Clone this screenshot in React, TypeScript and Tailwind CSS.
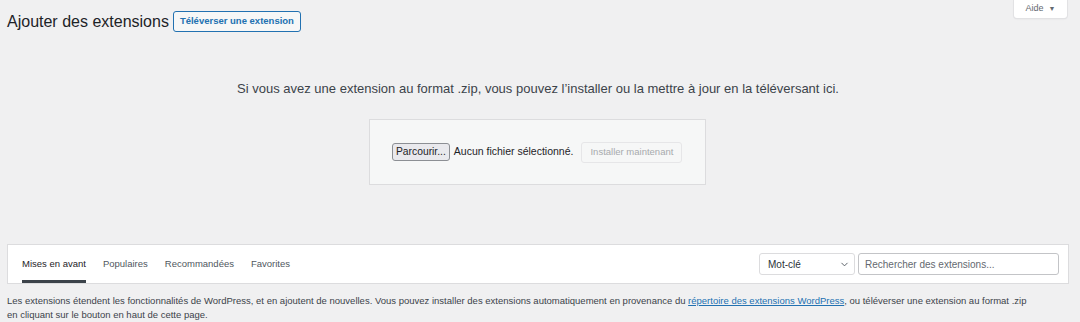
// "Ajouter des extensions" admin screen: upload panel + plugin filter bar.

import { ChevronDown } from 'lucide-react'

const TABS = ['Mises en avant', 'Populaires', 'Recommandées', 'Favorites']

export default function App() {
  return (
    <div
      className="w-[1080px] h-[322px] overflow-hidden bg-[#f0f0f1] text-[#3c434a] relative"
      style={{ fontFamily: '"Liberation Sans", Arial, sans-serif' }}
    >
      {/* help tab */}
      <div className="absolute right-[13px] top-0 w-[53px] h-[18px] bg-white rounded-b-[3px] shadow-[0_0_0_1px_#e2e2e4,0_1px_2px_rgba(0,0,0,0.08)] flex items-center justify-center gap-[5px] text-[9px] text-[#646970]">
        Aide <span className="text-[7px]">▼</span>
      </div>

      <div className="flex items-center gap-[4px] pl-[7px] pt-[11px]">
        <h1 className="text-[16px] leading-[21px] text-[#1d2327]">Ajouter des extensions</h1>
        <button className="h-[21px] px-[6px] border border-[#2271b1] rounded-[3px] bg-[#f6f7f7] text-[#2271b1] text-[9.5px] font-bold">
          Téléverser une extension
        </button>
      </div>

      <p className="mt-[49px] text-center text-[13px] leading-[16px] text-[#3c434a] pr-[4px]">
        Si vous avez une extension au format .zip, vous pouvez l’installer ou la mettre à jour en la téléversant ici.
      </p>

      <div className="ml-[369px] mt-[22px] w-[337px] h-[66px] border border-[#dcdcde] bg-[#f6f7f7] flex items-center pl-[22px] gap-[4px]">
        <button className="h-[18px] px-[3px] border border-[#8c8f94] rounded-[3px] bg-[#e9e9ed] text-[10.3px] text-[#1d2327]">
          Parcourir...
        </button>
        <span className="text-[10.5px] text-[#1d2327]">Aucun fichier sélectionné.</span>
        <button className="ml-[4px] h-[21px] px-[8px] border border-[#e6e6e8] rounded-[3px] bg-[#f6f7f7] text-[9.5px] text-[#a7aaad]">
          Installer maintenant
        </button>
      </div>

      <div className="ml-[7px] mt-[59px] w-[1062px] h-[40px] bg-white border border-[#dcdcde] flex items-center justify-between pl-[14px] pr-[9px]">
        <nav className="flex gap-[17px] h-full">
          {TABS.map((t, i) => (
            <span
              key={t}
              className={
                i === 0
                  ? 'flex items-center h-full text-[9.5px] text-[#1d2327] border-b-[3px] border-[#3c434a] pt-[3px]'
                  : 'flex items-center h-full text-[9.5px] text-[#50575e] border-b-[3px] border-transparent pt-[3px]'
              }
            >
              {t}
            </span>
          ))}
        </nav>
        <div className="flex gap-[3px]">
          <div className="w-[96px] h-[22px] border border-[#dcdcde] rounded-[3px] bg-white flex items-center justify-between pl-[8px] pr-[4px] text-[10px] text-[#2c3338]">
            Mot-clé
            <ChevronDown size={11} className="text-[#50575e]" />
          </div>
          <div className="w-[201px] h-[22px] border border-[#c3c4c7] rounded-[3px] bg-white flex items-center pl-[6px] text-[10px] text-[#646970]">
            Rechercher des extensions...
          </div>
        </div>
      </div>

      <p className="ml-[7px] mt-[10px] text-[9.5px] leading-[14px] text-[#3c434a] w-[1040px]">
        Les extensions étendent les fonctionnalités de WordPress, et en ajoutent de nouvelles. Vous pouvez installer des extensions automatiquement en provenance du{' '}
        <a className="text-[#2271b1] underline">répertoire des extensions WordPress</a>, ou téléverser une extension au format .zip
        <br />
        en cliquant sur le bouton en haut de cette page.
      </p>
    </div>
  )
}
